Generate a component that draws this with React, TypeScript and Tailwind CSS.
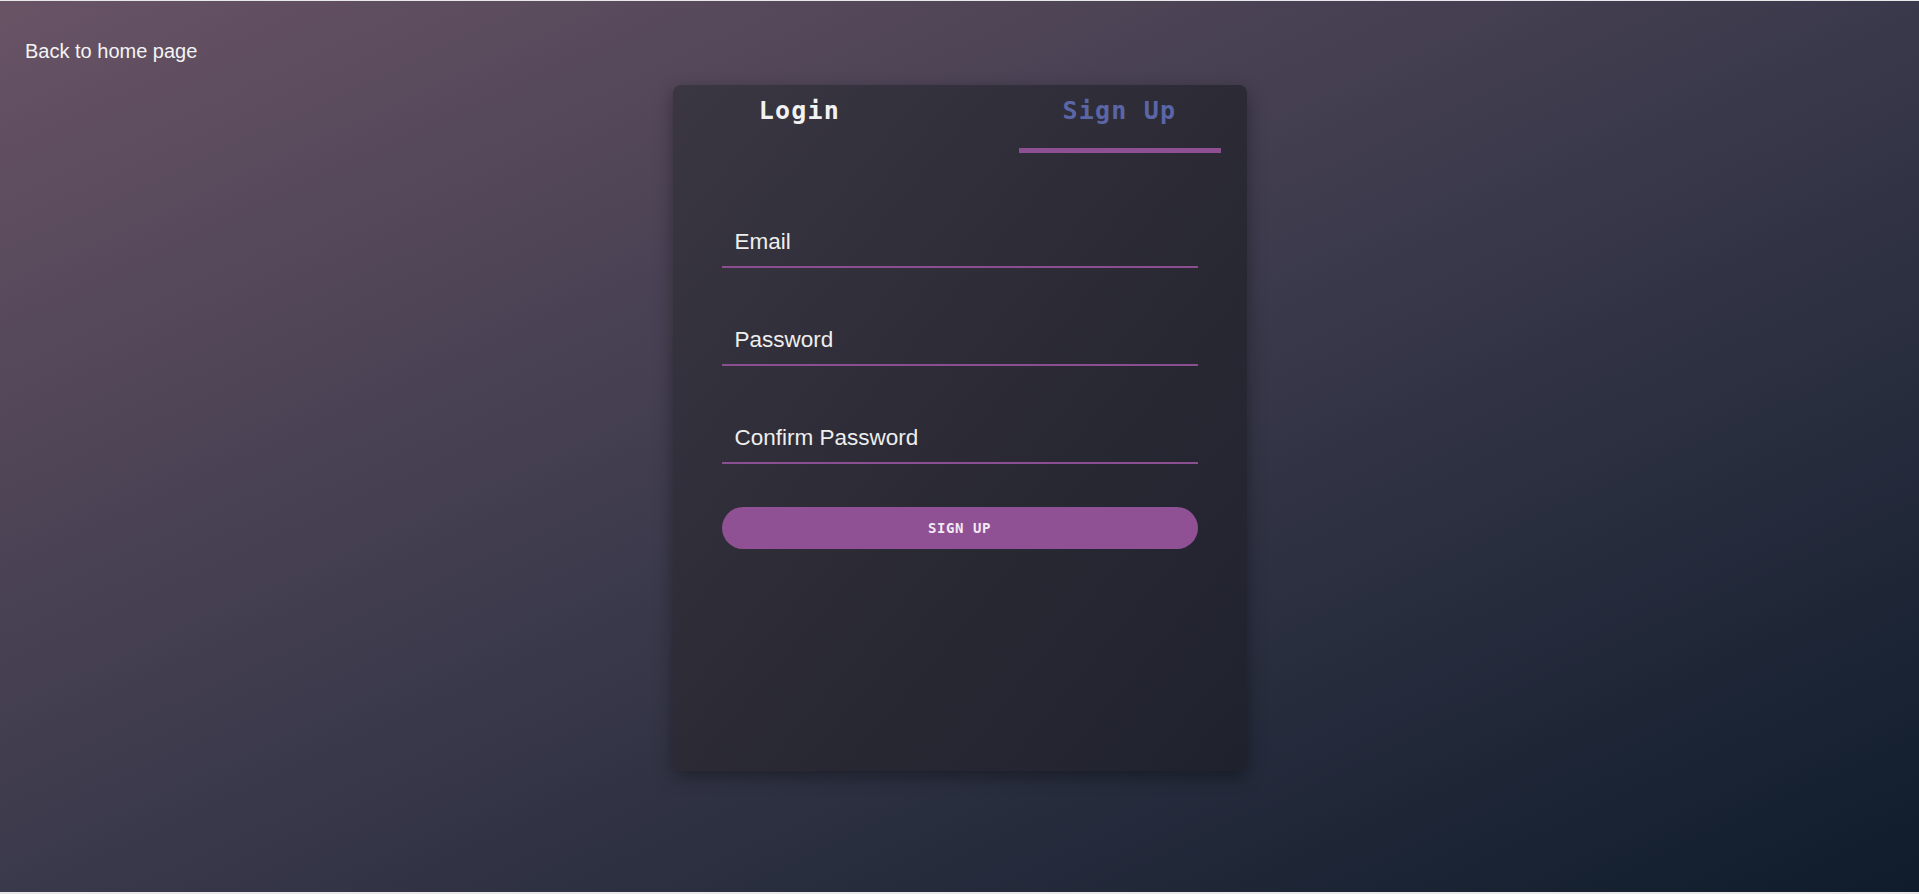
import { useState } from 'react'

const Field = ({ placeholder, type = 'text' }: { placeholder: string; type?: string }) => {
  return (
    <input
      type={type}
      placeholder={placeholder}
      className="block w-full h-[44px] pb-[6px] bg-transparent border-b-2 border-[#8b4f91] pl-[13px] text-[22.5px] text-[#eeeeee] placeholder:text-[#eeeeee] outline-none font-['Liberation_Sans',Arial,sans-serif]"
    />
  )
}

const App = () => {
  const [tab, setTab] = useState<'login' | 'signup'>('signup')

  return (
    <div className="w-full h-[894px] bg-[#e8e8ea] pt-px">
      <div className="h-[891px] bg-[linear-gradient(to_bottom_right,#685365,#3a394b_50%,#0f1c2b)] font-['Liberation_Sans',Arial,sans-serif]">
        {/* Back link */}
        <div className="pt-[39px] pl-[25px]">
          <a href="#" className="inline-block text-[20px] leading-[23px] text-[#f4f4f4]">
            Back to home page
          </a>
        </div>

        {/* Card */}
        <div className="mt-[20px] mx-auto w-[574px] h-[686px] rounded-lg bg-[linear-gradient(to_bottom_right,#3a3743,#2b2a35_50%,#1f222d)] shadow-[0_6px_18px_rgba(0,0,0,0.35)]">
          <div className="flex justify-between px-[26px]">
            <button
              onClick={() => setTab('login')}
              className={`w-[202px] h-[68px] pt-[11px] flex justify-center items-start border-b-[5px] font-['DejaVu_Sans_Mono',monospace] font-bold text-[25px] tracking-[1.2px] leading-[29px] ${
                tab === 'login' ? 'border-[#8e4f93] text-[#5a66a6]' : 'border-transparent text-[#f2f2f2]'
              }`}
            >
              Login
            </button>
            <button
              onClick={() => setTab('signup')}
              className={`w-[202px] h-[68px] pt-[11px] flex justify-center items-start border-b-[5px] font-['DejaVu_Sans_Mono',monospace] font-bold text-[25px] tracking-[1.2px] leading-[29px] ${
                tab === 'signup' ? 'border-[#8e4f93] text-[#5a66a6]' : 'border-transparent text-[#f2f2f2]'
              }`}
            >
              Sign Up
            </button>
          </div>

          {/* Form */}
          <form className="mt-[71px] px-[49px] flex flex-col" onSubmit={(e) => e.preventDefault()}>
            <Field placeholder="Email" type="email" />
            <div className="mt-[54px]">
              <Field placeholder="Password" type="password" />
            </div>
            <div className="mt-[54px]">
              <Field placeholder="Confirm Password" type="password" />
            </div>
            <button
              type="submit"
              className="mt-[43px] h-[42px] w-full rounded-full bg-[#8f5094] text-[#f3e9f3] font-['DejaVu_Sans_Mono',monospace] font-bold text-[14px] tracking-[0.6px]"
            >
              SIGN UP
            </button>
          </form>
        </div>
      </div>
    </div>
  )
}

export default App
